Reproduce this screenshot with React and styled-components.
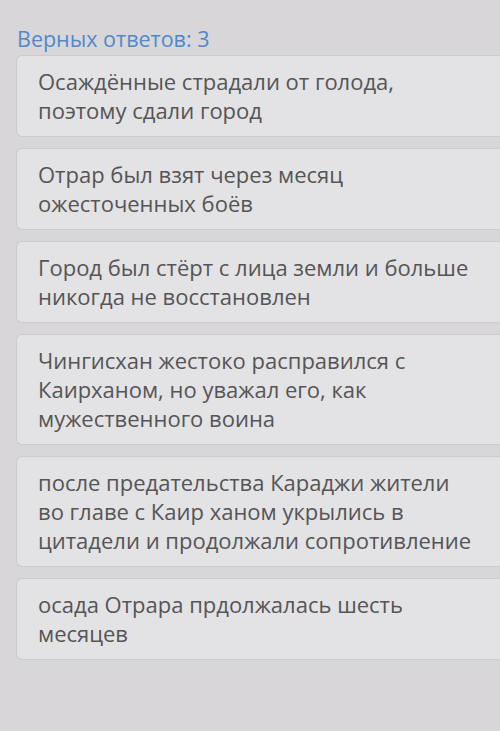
import React from "react";
import styled, { createGlobalStyle } from "styled-components";

const Global = createGlobalStyle`
  html, body { margin: 0; padding: 0; }
  body {
    background: #d8d6d9;
    font-family: "Open Sans", "Noto Sans", sans-serif;
    width: 500px;
    height: 731px;
    overflow: hidden;
  }
`;

const Page = styled.div`
  display: flex;
  flex-direction: column;
  padding: 26px 0 0 16px;
`;

const Title = styled.div`
  font-size: 21.5px;
  line-height: 26px;
  color: #5089cd;
  padding-left: 1px;
  margin-bottom: 3px;
`;

const List = styled.div`
  display: flex;
  flex-direction: column;
  gap: 11px;
`;

const Card = styled.div`
  background: #e3e2e4;
  border: 1px solid #cbcacd;
  border-right: none;
  border-radius: 6px 0 0 6px;
  padding: 11px 6px 11px 21px;
  font-size: 22px;
  line-height: 29px;
  color: #555557;
  white-space: nowrap;
`;

const answers = [
  ["Осаждённые страдали от голода,", "поэтому сдали город"],
  ["Отрар был взят через месяц", "ожесточенных боёв"],
  ["Город был стёрт с лица земли и больше", "никогда не восстановлен"],
  ["Чингисхан жестоко расправился с", "Каирханом, но уважал его, как", "мужественного воина"],
  ["после предательства Караджи жители", "во главе с Каир ханом укрылись в", "цитадели и продолжали сопротивление"],
  ["осада Отрара прдолжалась шесть", "месяцев"],
];

export default function App() {
  return (
    <>
      <Global />
      <Page>
        <Title>Верных ответов: 3</Title>
        <List>
          {answers.map((lines, i) => (
            <Card key={i}>
              {lines.map((l, j) => (
                <React.Fragment key={j}>
                  {l}
                  {j < lines.length - 1 && <br />}
                </React.Fragment>
              ))}
            </Card>
          ))}
        </List>
      </Page>
    </>
  );
}
